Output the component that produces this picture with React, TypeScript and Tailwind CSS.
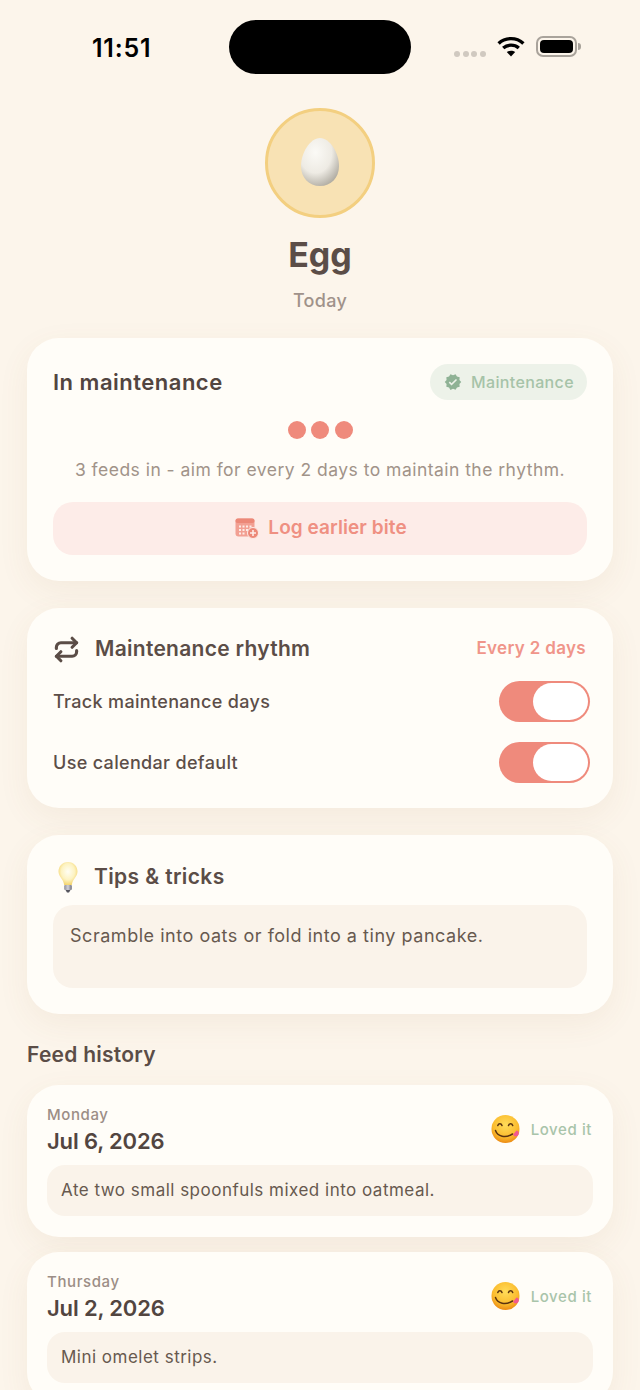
import { Repeat } from "lucide-react";
import { MdVerified } from "react-icons/md";

const FONT = "font-['Inter','Noto_Sans',sans-serif]";

// Ovo do avatar
function EggPicture() {
  return (
    <svg width="40" height="50" viewBox="0 0 40 50">
      <defs>
        <radialGradient id="casca" cx="38%" cy="30%" r="78%">
          <stop offset="0%" stopColor="#fbfaf6" />
          <stop offset="55%" stopColor="#eeebe4" />
          <stop offset="100%" stopColor="#aaa69c" />
        </radialGradient>
      </defs>
      <path d="M20 1C30 1 39 16 39 29C39 41 31 49 20 49C9 49 1 41 1 29C1 16 10 1 20 1Z" fill="url(#casca)" />
    </svg>
  );
}

function WifiIcon() {
  return (
    <svg width="28" height="21" viewBox="0 0 28 21" fill="none" stroke="#000" strokeWidth="3.4">
      <path d="M1.6 7.4C8.5 1 19.5 1 26.4 7.4" />
      <path d="M6.2 12C10.6 8.2 17.4 8.2 21.8 12" />
      <path d="M14 20.6L9.8 16C12.2 14.2 15.8 14.2 18.2 16Z" fill="#000" stroke="none" />
    </svg>
  );
}

function BatteryIcon() {
  return (
    <div className="flex items-center">
      <div className="w-[41px] h-[21px] rounded-[7px] border-2 border-[#a9a39b] p-[2px]">
        <div className="w-full h-full rounded-[4px] bg-black" />
      </div>
      <div className="w-[3px] h-[7px] ml-[1px] rounded-r-full bg-[#a9a39b]" />
    </div>
  );
}

function CalendarPlusIcon() {
  return (
    <svg width="24" height="21" viewBox="0 0 24 21">
      <rect x="0.5" y="0.5" width="19" height="18" rx="3" fill="#f2a093" />
      <rect x="0.5" y="0.5" width="19" height="4.5" rx="2" fill="#ec8878" />
      <g fill="#fdece8">
        <rect x="4" y="7.5" width="2" height="2" />
        <rect x="7.5" y="7.5" width="2" height="2" />
        <rect x="11" y="7.5" width="2" height="2" />
        <rect x="14.500" y="7.5" width="2" height="2" />
        <rect x="4" y="11" width="2" height="2" />
        <rect x="7.5" y="11" width="2" height="2" />
        <rect x="11" y="11" width="2" height="2" />
        <rect x="4" y="14.500" width="2" height="2" />
        <rect x="7.5" y="14.500" width="2" height="2" />
      </g>
      <circle cx="18" cy="15" r="5.500" fill="#ec8878" stroke="#fdece8" strokeWidth="1" />
      <path d="M18 12V18M15 15H21" stroke="#fdece8" strokeWidth="1.600" />
    </svg>
  );
}

function BulbIcon() {
  return (
    <svg width="22" height="32" viewBox="0 0 22 32">
      <defs>
        <radialGradient id="vidro" cx="50%" cy="42%" r="58%">
          <stop offset="0%" stopColor="#fffef4" />
          <stop offset="60%" stopColor="#fdf3c2" />
          <stop offset="100%" stopColor="#f4d46e" />
        </radialGradient>
        <linearGradient id="rosca" x1="0" y1="0" x2="1" y2="0">
          <stop offset="0%" stopColor="#8d8d9a" />
          <stop offset="50%" stopColor="#d0d0d8" />
          <stop offset="100%" stopColor="#6f6f7c" />
        </linearGradient>
      </defs>
      <path d="M11 1C17 1 20.500 5.500 20.500 10.500C20.500 15.500 15.500 18 14.800 24H7.200C6.500 18 1.500 15.500 1.500 10.500C1.500 5.500 5 1 11 1Z" fill="url(#vidro)" />
      <rect x="7.200" y="24" width="7.600" height="5" rx="1" fill="url(#rosca)" />
      <path d="M8.500 29H13.500L12 31.500H10Z" fill="#55555f" />
    </svg>
  );
}

function YumEmoji() {
  return (
    <svg width="30" height="30" viewBox="0 0 30 30" fill="none">
      <defs>
        <radialGradient id="rosto" cx="50%" cy="35%" r="68%">
          <stop offset="0%" stopColor="#ffdc5a" />
          <stop offset="65%" stopColor="#fbbc2e" />
          <stop offset="100%" stopColor="#ea8410" />
        </radialGradient>
      </defs>
      <circle cx="14.500" cy="15" r="14" fill="url(#rosto)" />
      <path d="M6.800 11.500C7.600 9 10.200 9 11 11.500M17.500 11.500C18.300 9 20.900 9 21.700 11.500" stroke="#5a3210" strokeWidth="1.500" strokeLinecap="round" />
      <path d="M4.500 16.500C6.500 22.500 14.500 24.500 21.500 20" stroke="#5a3210" strokeWidth="1.500" strokeLinecap="round" />
      <path d="M22 20.800L25.500 16.500C27.500 16.800 28.500 18.800 27.500 20.800C26.500 22.800 23.500 23.300 22 20.800Z" fill="#f2588e" />
    </svg>
  );
}

function Toggle() {
  return (
    <div className="w-[91px] h-[41px] rounded-full bg-[#ef8a7c] p-[2px] flex justify-end">
      <div className="w-[55px] h-[37px] rounded-full bg-white" />
    </div>
  );
}

function RhythmRow({ label }: { label: string }) {
  return (
    <div className="flex items-center justify-between">
      <span className="text-[18px] tracking-[0.33px] font-medium text-[#5c4e48]">{label}</span>
      <div className="-mr-[3px]">
        <Toggle />
      </div>
    </div>
  );
}

const HISTORICO = [
  { dia: "Monday", data: "Jul 6, 2026", nota: "Ate two small spoonfuls mixed into oatmeal." },
  { dia: "Thursday", data: "Jul 2, 2026", nota: "Mini omelet strips." },
];

const CARD = "bg-[#fffdf8] rounded-[32px] shadow-[0_10px_32px_rgba(140,95,60,0.07)]";

export default function App() {
  return (
    <div className={`${FONT} w-[640px] h-[1390px] overflow-hidden bg-[#fcf5eb]`}>
      {/* Barra de status */}
      <div className="flex items-center pt-[20px] pl-[92px]">
        <span className="w-[137px] pt-[1px] text-[25px] tracking-[0.8px] leading-[30px] font-semibold text-black">11:51</span>
        <div className="w-[182px] h-[54px] rounded-[27px] bg-black" />
        <div className="flex items-center ml-[43px]">
          <div className="flex gap-[2.500px] mt-[13px]">
            <div className="w-[6px] h-[6px] rounded-full bg-[#d0c9c0]" />
            <div className="w-[6px] h-[6px] rounded-full bg-[#d0c9c0]" />
            <div className="w-[6px] h-[6px] rounded-full bg-[#d0c9c0]" />
            <div className="w-[6px] h-[6px] rounded-full bg-[#d0c9c0]" />
          </div>
          <div className="ml-[11px] -mt-[2px]">
            <WifiIcon />
          </div>
          <div className="ml-[11px] -mt-[2px]">
            <BatteryIcon />
          </div>
        </div>
      </div>

      {/* Cabeçalho do alimento */}
      <div className="flex flex-col items-center mt-[34px]">
        <div className="w-[110px] h-[110px] rounded-full border-[3px] border-[#f3cf80] bg-[#f8e2b4] flex items-center justify-center">
          <div className="-mt-[2px]">
            <EggPicture />
          </div>
        </div>
        <h1 className="mt-[15px] text-[34px] leading-[44px] font-bold text-[#5b4d47]">Egg</h1>
        <p className="mt-[12px] text-[18px] tracking-[0.3px] leading-[24px] font-medium text-[#a0928a]">Today</p>
      </div>

      <div className="px-[27px] mt-[25px]">
        {/* Status de manutenção */}
        <div className={`${CARD} h-[243px] px-[26px] pt-[26px]`}>
          <div className="flex items-center justify-between h-[36px]">
            <h2 className="text-[22px] tracking-[0.5px] leading-[36px] font-semibold text-[#524540]">In maintenance</h2>
            <div className="h-[36px] w-[157px] rounded-full bg-[#edf2e9] flex items-center pl-[14px] gap-[9px]">
              <MdVerified size={18} className="text-[#8fb295]" />
              <span className="text-[16px] tracking-[0.36px] font-medium text-[#a6c3a8]">Maintenance</span>
            </div>
          </div>
          <div className="flex justify-center gap-[5.500px] mt-[21px]">
            <div className="w-[18px] h-[18px] rounded-full bg-[#ef8a7c]" />
            <div className="w-[18px] h-[18px] rounded-full bg-[#ef8a7c]" />
            <div className="w-[18px] h-[18px] rounded-full bg-[#ef8a7c]" />
          </div>
          <p className="mt-[18px] text-center text-[17.500px] tracking-[0.47px] leading-[26px] text-[#a19389]">
            3 feeds in - aim for every 2 days to maintain the rhythm.
          </p>
          <button className="mt-[19px] w-full h-[53px] rounded-[20px] bg-[#fdece8] flex items-center justify-center gap-[9px] pl-[2px]">
            <CalendarPlusIcon />
            <span className="text-[19px] tracking-[0.07px] font-semibold text-[#ef9082]">Log earlier bite</span>
          </button>
        </div>

        {/* Ritmo de manutenção */}
        <div className={`${CARD} mt-[27px] h-[200px] px-[26px] pt-[26px]`}>
          <div className="flex items-center justify-between h-[30px]">
            <div className="flex items-center">
              <Repeat size={27} strokeWidth={2.8} className="text-[#5b4d47]" />
              <h2 className="ml-[15px] text-[21px] tracking-[0.28px] font-semibold text-[#5b4d47]">Maintenance rhythm</h2>
            </div>
            <span className="mr-[1px] text-[17px] tracking-[0.33px] font-semibold text-[#f0958a]">Every 2 days</span>
          </div>
          <div className="flex flex-col gap-[20px] mt-[17px]">
            <RhythmRow label="Track maintenance days" />
            <RhythmRow label="Use calendar default" />
          </div>
        </div>

        {/* Dicas */}
        <div className={`${CARD} mt-[27px] h-[179px] px-[26px] pt-[26px]`}>
          <div className="flex items-center h-[32px]">
            <div className="ml-[4px]">
              <BulbIcon />
            </div>
            <h2 className="ml-[15px] text-[21px] tracking-[0.38px] font-semibold text-[#5b4d47]">Tips &amp; tricks</h2>
          </div>
          <div className="mt-[12px] h-[83px] rounded-[20px] bg-[#faf3ea] px-[17px] pt-[17px]">
            <p className="text-[18px] tracking-[0.53px] leading-[28px] text-[#67594f]">Scramble into oats or fold into a tiny pancake.</p>
          </div>
        </div>

        <h2 className="mt-[27px] text-[21px] tracking-[0.25px] leading-[28px] font-semibold text-[#5b4d47]">Feed history</h2>

        {/* Histórico */}
        <div className="flex flex-col gap-[15px] mt-[16px]">
          {HISTORICO.map((item) => (
            <div key={item.data} className={`${CARD} h-[152px] px-[20px] pt-[21px]`}>
              <div className="flex items-center justify-between">
                <div>
                  <p className="text-[15px] tracking-[0.6px] leading-[18px] font-medium text-[#9c8e86]">{item.dia}</p>
                  <p className="mt-[2px] text-[22px] tracking-[-0.15px] leading-[30px] font-semibold text-[#524540]">{item.data}</p>
                </div>
                <div className="flex items-center gap-[10px] -mt-[3px]">
                  <div className="-mt-[2px]">
                    <YumEmoji />
                  </div>
                  <span className="mt-[1px] mr-[1px] text-[15px] tracking-[0.6px] font-medium text-[#a9c4aa]">Loved it</span>
                </div>
              </div>
              <div className="mt-[9px] h-[51px] rounded-[18px] bg-[#faf3ea] px-[14px] pt-[1px] flex items-center">
                <p className="text-[17px] tracking-[0.49px] text-[#67594f]">{item.nota}</p>
              </div>
            </div>
          ))}
        </div>
      </div>
    </div>
  );
}
